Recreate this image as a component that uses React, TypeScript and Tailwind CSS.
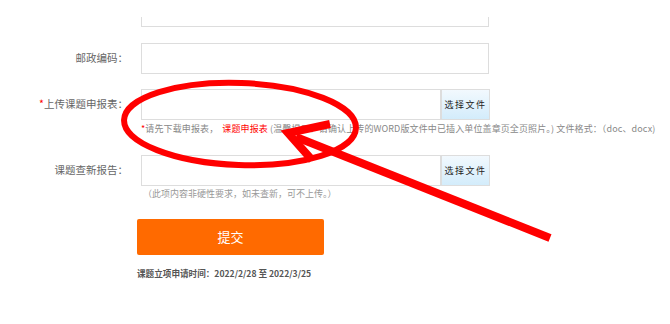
const cjk = { fontFamily: '"Noto Sans CJK SC", "Noto Sans", sans-serif' }

function Label({ children, required = false }: { children: React.ReactNode; required?: boolean }) {
  return (
    <div className="w-[128px] shrink-0 text-right text-[10.5px] leading-none text-[#666]">
      {required && <span className="text-[#f00]">*</span>}
      {children}
    </div>
  )
}

function FileButton() {
  return (
    <div className="flex h-full w-[49px] items-center justify-center border border-[#ddd] bg-gradient-to-b from-[#f2f9fe] to-[#d3ecfb] text-[9px] tracking-[1.5px] text-[#222]">
      选择文件
    </div>
  )
}

export default function App() {
  return (
    <div className="relative h-[324px] w-[670px] overflow-hidden bg-white" style={cjk}>
      <div className="flex flex-col pt-[17px]">
        {/* cut-off field at top */}
        <div className="ml-[141px] h-[10px] w-[348px] border-x border-b border-[#ddd]"></div>

        {/* postal code */}
        <div className="mt-[16px] flex h-[31px] items-center">
          <Label>邮政编码：</Label>
          <div className="ml-[13px] h-full w-[348px] border border-[#ddd]"></div>
        </div>

        {/* upload application form */}
        <div className="mt-[15px] flex h-[31px] items-center">
          <Label required>上传课题申报表：</Label>
          <div className="ml-[13px] flex h-full">
            <div className="h-full w-[300px] border border-[#ddd]"></div>
            <FileButton />
          </div>
        </div>
        <div className="ml-[141px] mt-[3px] whitespace-nowrap text-[9px] leading-[12px] tracking-[0.12px] text-[#888]">
          <span className="text-[#f00]">*</span>请先下载申报表，
          <span className="ml-[4px] text-[#f00]">课题申报表</span> (温馨提示：请确认上传的WORD版文件中已插入单位盖章页全页照片。) 文件格式：（doc、docx)
        </div>

        {/* novelty search report */}
        <div className="mt-[20px] flex h-[31px] items-center">
          <Label>课题查新报告：</Label>
          <div className="ml-[13px] flex h-full">
            <div className="h-full w-[300px] border border-[#ddd]"></div>
            <FileButton />
          </div>
        </div>
        <div className="ml-[143px] mt-[2px] whitespace-nowrap text-[9px] leading-[12px] text-[#999]">
          （此项内容非硬性要求，如未查新，可不上传。）
        </div>

        {/* submit */}
        <div className="ml-[137px] mt-[19px] flex h-[36px] w-[187px] items-center justify-center rounded-[2px] bg-[#ff6a00] text-[13px] text-white">
          提交
        </div>
        <div className="ml-[137px] mt-[12px] whitespace-nowrap text-[8.6px] font-bold text-[#555]">
          课题立项申请时间：2022/2/28 至 2022/3/25
        </div>
      </div>

      {/* red annotation */}
      <svg className="pointer-events-none absolute inset-0" width="670" height="324" viewBox="0 0 670 324">
        <ellipse cx="240" cy="124" rx="116" ry="41" fill="none" stroke="#f00" strokeWidth="6" transform="rotate(2 240 124)" />
        <line x1="550" y1="238" x2="296" y2="137" stroke="#f00" strokeWidth="8" />
        <polyline points="330,124 288,133 312,160" fill="none" stroke="#f00" strokeWidth="8" strokeLinejoin="miter" />
      </svg>
    </div>
  )
}
